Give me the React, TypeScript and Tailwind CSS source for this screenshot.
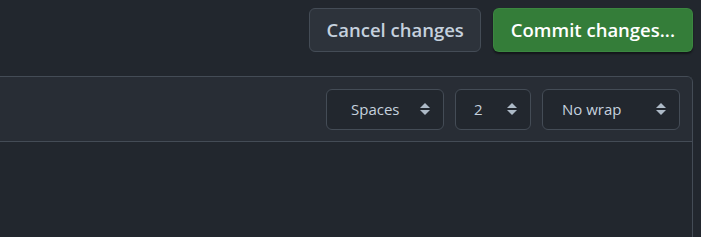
import React from 'react';

const SelectArrows = () => (
  <svg width="12" height="16" viewBox="0 0 12 16" className="shrink-0">
    <path d="M6 2 L11 7 H1 Z" fill="#adbac7" />
    <path d="M6 14 L11 9 H1 Z" fill="#adbac7" />
  </svg>
);

const Select = ({ label, className }: { label: string; className: string }) => (
  <div
    className={`${className} h-[41px] flex items-center justify-between pr-[12px] rounded-[6px] border border-[#444c56] bg-[#22272e] text-[#c5d1de] text-[15px]`}
  >
    <span>{label}</span>
    <SelectArrows />
  </div>
);

export default function App() {
  return (
    <div
      className="w-[701px] h-[237px] bg-[#22272e] overflow-hidden"
      style={{ fontFamily: '"Segoe UI", "Open Sans", "Noto Sans", sans-serif' }}
    >
      <div className="flex justify-end gap-[12px] pt-[8px] pr-[8px] h-[76px]">
        <button className="h-[44px] px-[16px] rounded-[6px] border border-[#444c56] bg-[#2d333b] text-[#c5d1de] text-[18.5px] font-semibold">
          Cancel changes
        </button>
        <button className="h-[44px] px-[17px] rounded-[6px] border border-[#46954a]/40 bg-[#347d39] text-white text-[18.5px] font-semibold shadow-[0_2px_2px_rgba(0,0,0,0.45)]">
          Commit changes...
        </button>
      </div>
      <div className="w-[693px] h-[161px] border-t border-r border-[#444c56] rounded-tr-[6px]">
        <div className="h-[65px] bg-[#2d333b]/50 border-b border-[#444c56] flex items-center justify-end gap-[11px] pr-[12px]">
          <Select label="Spaces" className="w-[118px] pl-[24px]" />
          <Select label="2" className="w-[76px] pl-[18px]" />
          <Select label="No wrap" className="w-[138px] pl-[19px]" />
        </div>
      </div>
    </div>
  );
}
